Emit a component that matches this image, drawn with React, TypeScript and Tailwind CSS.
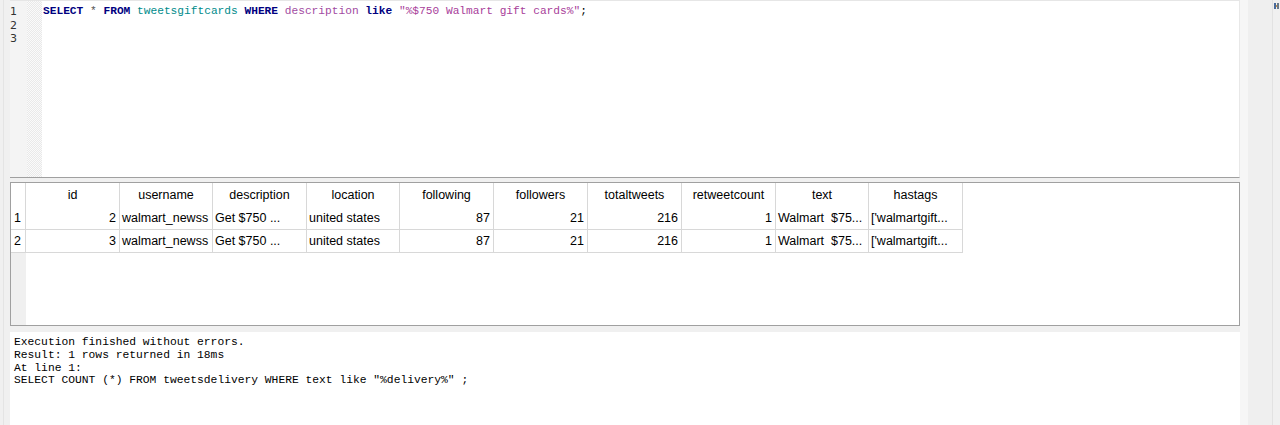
const columns = [
  { name: 'id', w: 'w-[94px]' },
  { name: 'username', w: 'w-[93px]' },
  { name: 'description', w: 'w-[94px]' },
  { name: 'location', w: 'w-[93px]' },
  { name: 'following', w: 'w-[94px]' },
  { name: 'followers', w: 'w-[94px]' },
  { name: 'totaltweets', w: 'w-[94px]' },
  { name: 'retweetcount', w: 'w-[94px]' },
  { name: 'text', w: 'w-[93px]' },
  { name: 'hastags', w: 'w-[94px]' },
];

const rows = [
  ['2', 'walmart_newss', 'Get $750 ...', 'united states', '87', '21', '216', '1', 'Walmart\u00a0 $75...', "['walmartgift..."],
  ['3', 'walmart_newss', 'Get $750 ...', 'united states', '87', '21', '216', '1', 'Walmart\u00a0 $75...', "['walmartgift..."],
];

const numeric = [true, false, false, false, true, true, true, true, false, false];

export default function App() {
  return (
    <div className="w-[1280px] h-[425px] flex bg-[#f0f0f0] overflow-hidden text-black font-['Liberation_Sans',Arial,sans-serif]">
      {/* left frame */}
      <div className="w-[10px] flex">
        <div className="w-[3px]" />
        <div className="w-[1px] bg-[#e4e4e4]" />
      </div>

      {/* main column */}
      <div className="w-[1230px] flex flex-col">
        {/* SQL editor */}
        <div className="h-[178px] flex bg-white border-t border-[#e6e6e6] border-b border-b-[#a0a0a0] border-r border-r-[#e8e8e8]">
          <div className="w-[17px] bg-[#f4f4f4] pt-[4px] text-[11px] leading-[13.5px] text-[#333] font-['DejaVu_Sans',sans-serif]">
            <div>1</div>
            <div>2</div>
            <div>3</div>
          </div>
          <div className="w-[15px] bg-[repeating-conic-gradient(#e9e9e9_0_25%,#fafafa_0_50%)] bg-[length:2px_2px]" />
          <div className="flex-1 pl-[1px] pt-[4px] text-[11.2px] leading-[13.5px] whitespace-pre font-['Liberation_Mono','Courier_New',monospace]">
            <div>
              <span className="font-bold text-[#00007f]">SELECT</span>
              <span className="text-[#555]"> * </span>
              <span className="font-bold text-[#00007f]">FROM</span>{' '}
              <span className="text-[#008b8b]">tweetsgiftcards</span>{' '}
              <span className="font-bold text-[#00007f]">WHERE</span>{' '}
              <span className="text-[#a24ba2]">description</span>{' '}
              <span className="font-bold text-[#00007f]">like</span>{' '}
              <span className="text-[#a8409a]">"%$750 Walmart gift cards%"</span>
              <span>;</span>
            </div>
          </div>
        </div>

        <div className="h-[4px]" />

        {/* result grid */}
        <div className="h-[144px] bg-white border border-[#a0a0a0] flex flex-col text-[12.5px]">
          <div className="h-[24px] flex">
            <div className="w-[15px] border-r border-[#d8d8d8]" />
            {columns.map((c) => (
              <div key={c.name} className={`${c.w} border-r border-[#d8d8d8] text-center pt-[1px] leading-[23px]`}>
                {c.name}
              </div>
            ))}
          </div>
          {rows.map((r, i) => (
            <div key={i} className="h-[23px] flex">
              <div className="w-[15px] border-r border-b border-[#d8d8d8] pl-[3px] pt-[1px] leading-[21px]">{i + 1}</div>
              {r.map((v, j) => (
                <div
                  key={j}
                  className={`${columns[j].w} border-r border-b border-[#d8d8d8] pt-[1px] leading-[21px] whitespace-pre overflow-hidden ${
                    numeric[j] ? 'text-right pr-[3px]' : 'pl-[2px]'
                  }`}
                >
                  {v}
                </div>
              ))}
            </div>
          ))}
          <div className="flex-1 flex">
            <div className="w-[15px] bg-[#f0f0f0]" />
          </div>
        </div>

        <div className="h-[6px]" />

        {/* messages */}
        <div className="flex-1 bg-white pl-[4px] pt-[4px] text-[11.3px] leading-[12.8px] whitespace-pre font-['Liberation_Mono','Courier_New',monospace]">
          <div>Execution finished without errors.</div>
          <div>Result: 1 rows returned in 18ms</div>
          <div>At line 1:</div>
          <div>SELECT COUNT (*) FROM tweetsdelivery WHERE text like "%delivery%" ;</div>
        </div>
      </div>

      {/* right dock */}
      <div className="w-[40px] flex">
        <div className="w-[8px] bg-[#f6f6f6]" />
        <div className="w-[25px] bg-[#efefef] border-r border-[#e2e2e2]" />
        <div className="flex-1 pt-[3px] pl-[1px]">
          <svg width="5" height="6" viewBox="0 0 5 6">
            <rect x="0" y="0" width="2" height="6" fill="#4a6a9a" />
            <rect x="2" y="2" width="1" height="2" fill="#c89040" />
            <rect x="3" y="0" width="2" height="6" fill="#6a7a8a" />
          </svg>
        </div>
      </div>
    </div>
  );
}
